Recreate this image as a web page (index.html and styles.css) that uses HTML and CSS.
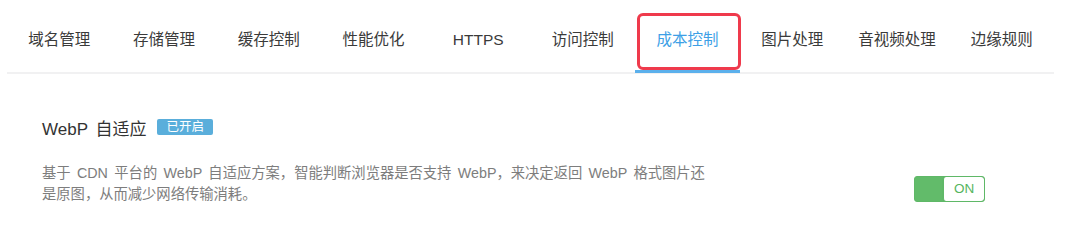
FILE: index.html
```html
<!DOCTYPE html>
<html lang="zh-CN">
<head>
<meta charset="utf-8">
<link rel="stylesheet" href="styles.css">
</head>
<body>
<nav class="tabs">
  <div class="tab">域名管理</div>
  <div class="tab">存储管理</div>
  <div class="tab">缓存控制</div>
  <div class="tab">性能优化</div>
  <div class="tab">HTTPS</div>
  <div class="tab">访问控制</div>
  <div class="tab active">成本控制</div>
  <div class="tab">图片处理</div>
  <div class="tab">音视频处理</div>
  <div class="tab">边缘规则</div>
</nav>
<section class="feature">
  <div class="title-row">
    <span class="title">WebP 自适应</span>
    <span class="badge">已开启</span>
  </div>
  <div class="row">
    <p class="desc">基于 CDN 平台的 WebP 自适应方案，智能判断浏览器是否支持 WebP，来决定返回 WebP 格式图片还<br>是原图，从而减少网络传输消耗。</p>
    <div class="toggle">
      <div class="toggle-fill"></div>
      <div class="toggle-knob">ON</div>
    </div>
  </div>
</section>
</body>
</html>
```
FILE: styles.css
```css
*, *::before, *::after { box-sizing: border-box; }
html, body { margin: 0; background: #fff; }
body {
  font-family: "Liberation Sans", "Noto Sans CJK SC", sans-serif;
  color: #333;
  width: 1080px;
  height: 244px;
  overflow: hidden;
}
.tabs {
  display: flex;
  margin-left: 7px;
  width: 1047px;
  height: 74px;
  border-bottom: 2px solid #f1f1f2;
}
.tab {
  flex: 1 1 0;
  position: relative;
  text-align: center;
  font-size: 15.5px;
  line-height: 23px;
  padding-top: 28px;
  color: #3a3a3a;
}
.tab.active { color: #3d9fe6; }
.tab.active::after {
  content: "";
  position: absolute;
  left: 0;
  right: 0;
  top: 70px;
  height: 3px;
  background: #5bb0ec;
}
.tab.active::before {
  content: "";
  position: absolute;
  left: 2px;
  top: 13px;
  width: 104px;
  height: 57px;
  border: 3px solid #ef3a4c;
  border-radius: 6px;
}
.feature {
  padding: 44px 0 0 42px;
}
.title-row {
  display: flex;
  align-items: flex-start;
  gap: 11px;
  height: 24px;
}
.title {
  font-size: 17px;
  line-height: 24px;
  color: #333;
  word-spacing: 3px;
}
.badge {
  display: inline-block;
  background: #5aaedb;
  color: #fff;
  font-size: 12.5px;
  line-height: 16px;
  height: 16px;
  padding: 0 9px 0 9px;
  border-radius: 2px;
  margin-top: 1px;
}
.row {
  display: flex;
  align-items: flex-end;
  justify-content: space-between;
  margin-top: 20.5px;
  width: 943px;
}
.desc {
  margin: 0;
  font-size: 14.3px;
  line-height: 21px;
  color: #7d7d7d;
  white-space: nowrap;
  word-spacing: 2.4px;
}
.toggle {
  display: flex;
  width: 71px;
  height: 26px;
  border: 1px solid #5fb867;
  border-radius: 3px;
  background: #62bb6a;
  margin-bottom: 2.5px;
  overflow: hidden;
}
.toggle-fill { flex: 0 0 28px; }
.toggle-knob {
  flex: 1;
  background: #fff;
  border-left: 1px solid #5fb867;
  border-radius: 3px;
  color: #55b55e;
  font-size: 13.5px;
  line-height: 24px;
  text-align: center;
  box-shadow: 0 0 1px rgba(0,0,0,0.15);
}
```
